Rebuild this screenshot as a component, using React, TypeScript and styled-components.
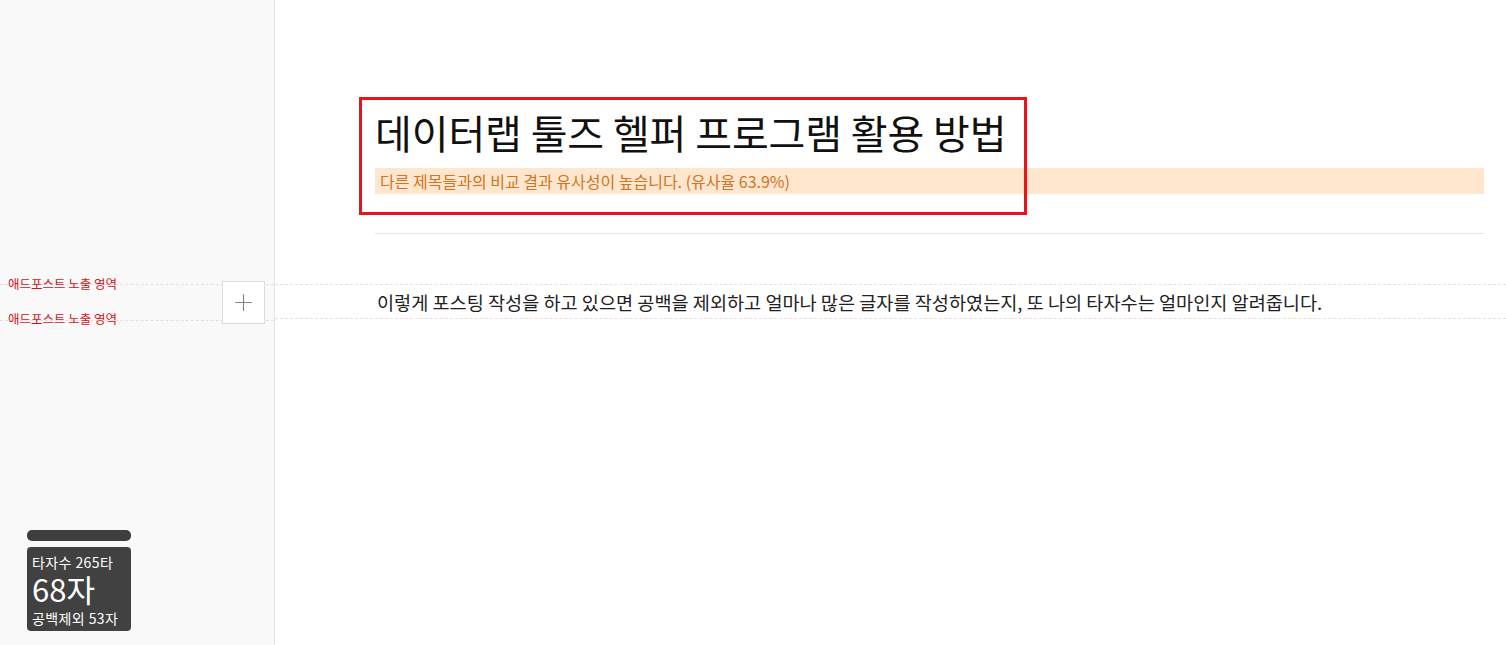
import styled, { createGlobalStyle } from 'styled-components'
import { Plus } from 'lucide-react'

const GlobalStyle = createGlobalStyle`
  html, body {
    margin: 0;
    padding: 0;
    background: #fff;
  }

  body {
    font-family: 'Noto Sans CJK KR', 'Noto Sans', sans-serif;
    color: #222;
  }
`

const GUIDE = `1px dashed #f2d9db`

const stats = { strokes: 265, chars: 68, noSpace: 53 }

export default function App() {
  return (
    <>
      <GlobalStyle />
      <Page>
        <Sidebar>
          <AdZone>
            <AdLabel $edge="top">애드포스트 노출 영역</AdLabel>
            <AdLabel $edge="bottom">애드포스트 노출 영역</AdLabel>
            <AddButton type="button" aria-label="추가">
              <Plus size={27} strokeWidth={1} color="#858585" />
            </AddButton>
          </AdZone>
          <Counter>
            <CounterBar />
            <CounterBox>
              <CounterSmall $height={20}>타자수 {stats.strokes}타</CounterSmall>
              <CounterBig>{stats.chars}자</CounterBig>
              <CounterSmall $height={24}>공백제외 {stats.noSpace}자</CounterSmall>
            </CounterBox>
          </Counter>
        </Sidebar>
        <Editor>
          <Column>
            <TitleBlock>
              <Title>데이터랩 툴즈 헬퍼 프로그램 활용 방법</Title>
              <Warning>다른 제목들과의 비교 결과 유사성이 높습니다. (유사율 63.9%)</Warning>
              <Highlight />
            </TitleBlock>
            <Divider />
          </Column>
          <BodyRow>
            <Paragraph>
              이렇게 포스팅 작성을 하고 있으면 공백을 제외하고 얼마나 많은 글자를 작성하였는지, 또 나의 타자수는 얼마인지 알려줍니다.
            </Paragraph>
          </BodyRow>
        </Editor>
      </Page>
    </>
  )
}

const Page = styled.div`
  display: flex;
  height: 100vh;
  min-height: 645px;
`

const Sidebar = styled.aside`
  display: flex;
  flex-direction: column;
  width: 275px;
  flex-shrink: 0;
  padding-top: 284px;
  padding-bottom: 14px;
  box-sizing: border-box;
  background: #f9f9f9;
  border-right: 1px solid #e6e6e6;
`

const AdZone = styled.div`
  position: relative;
  height: 35px;
  border-top: ${GUIDE};
  border-bottom: ${GUIDE};
`

interface IAdLabelProps {
  $edge: 'top' | 'bottom'
}

const AdLabel = styled.span<IAdLabelProps>`
  position: absolute;
  left: 8px;
  top: ${({ $edge }) => ($edge === 'top' ? '-9px' : '26px')};
  font-size: 12.5px;
  line-height: 16px;
  color: #d2141c;
`

const AddButton = styled.button`
  position: absolute;
  right: 9px;
  top: -4px;
  display: flex;
  align-items: center;
  justify-content: center;
  width: 43px;
  height: 43px;
  padding: 0;
  background: #fff;
  border: 1px solid #dcdcdc;
  cursor: pointer;
`

const Counter = styled.div`
  display: flex;
  flex-direction: column;
  gap: 6px;
  width: 104px;
  margin-top: auto;
  margin-left: 27px;
`

const CounterBar = styled.div`
  height: 11px;
  border-radius: 5px;
  background: #3e3e3e;
`

const CounterBox = styled.div`
  display: flex;
  flex-direction: column;
  height: 84px;
  box-sizing: border-box;
  padding: 5px 5px 0;
  border-radius: 4px;
  background: #414141;
  color: #fff;
  overflow: hidden;
`

interface ICounterSmallProps {
  $height: number
}

const CounterSmall = styled.div<ICounterSmallProps>`
  font-size: 14px;
  line-height: ${({ $height }) => `${$height}px`};
  white-space: nowrap;
  letter-spacing: 0.4px;
`

const CounterBig = styled.div`
  font-size: 31px;
  line-height: 34px;
`

const Editor = styled.main`
  flex: 1;
  padding-top: 108px;
`

const Column = styled.div`
  padding: 0 22px 0 100px;
`

const TitleBlock = styled.div`
  position: relative;
`

const Title = styled.h1`
  margin: 0;
  font-size: 40px;
  font-weight: 400;
  line-height: 48px;
  color: #111;
  letter-spacing: -0.1px;
  white-space: nowrap;
`

const Warning = styled.p`
  margin: 12px 0 0;
  padding: 0 5px;
  height: 26px;
  font-size: 16px;
  line-height: 26px;
  color: #cf7522;
  background: #fee6cf;
`

const Highlight = styled.div`
  position: absolute;
  left: -16px;
  top: -11px;
  width: 668px;
  height: 118px;
  box-sizing: border-box;
  border: 3px solid #e8141c;
  pointer-events: none;
`

const Divider = styled.hr`
  margin: 39px 0 0;
  border: none;
  border-top: 1px solid #e5e5e5;
`

const BodyRow = styled.div`
  margin-top: 50px;
  padding: 0 22px 0 102px;
  border-top: ${GUIDE};
  border-bottom: ${GUIDE};
`

const Paragraph = styled.p`
  margin: 0;
  font-size: 18.6px;
  line-height: 33px;
  color: #222;
  white-space: nowrap;
`
